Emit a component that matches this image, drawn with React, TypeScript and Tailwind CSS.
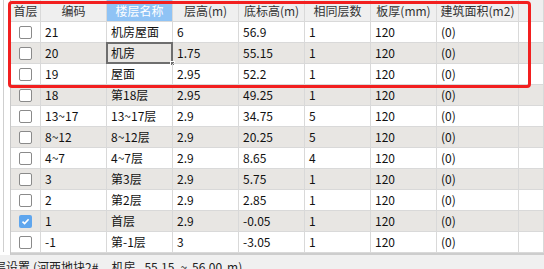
import React from "react";

type Row = { first: boolean; code: string; name: string; h: string; base: string; same: string; thick: string; area: string };

const rows: Row[] = [
  { first: false, code: "21", name: "机房屋面", h: "6", base: "56.9", same: "1", thick: "120", area: "(0)" },
  { first: false, code: "20", name: "机房", h: "1.75", base: "55.15", same: "1", thick: "120", area: "(0)" },
  { first: false, code: "19", name: "屋面", h: "2.95", base: "52.2", same: "1", thick: "120", area: "(0)" },
  { first: false, code: "18", name: "第18层", h: "2.95", base: "49.25", same: "1", thick: "120", area: "(0)" },
  { first: false, code: "13~17", name: "13~17层", h: "2.9", base: "34.75", same: "5", thick: "120", area: "(0)" },
  { first: false, code: "8~12", name: "8~12层", h: "2.9", base: "20.25", same: "5", thick: "120", area: "(0)" },
  { first: false, code: "4~7", name: "4~7层", h: "2.9", base: "8.65", same: "4", thick: "120", area: "(0)" },
  { first: false, code: "3", name: "第3层", h: "2.9", base: "5.75", same: "1", thick: "120", area: "(0)" },
  { first: false, code: "2", name: "第2层", h: "2.9", base: "2.85", same: "1", thick: "120", area: "(0)" },
  { first: true, code: "1", name: "首层", h: "2.9", base: "-0.05", same: "1", thick: "120", area: "(0)" },
  { first: false, code: "-1", name: "第-1层", h: "3", base: "-3.05", same: "1", thick: "120", area: "(0)" },
];

const headers = ["首层", "编码", "楼层名称", "层高(m)", "底标高(m)", "相同层数", "板厚(mm)", "建筑面积(m2)", ""];

function Check({ on }: { on: boolean }) {
  if (on) {
    return (
      <div className="w-[13px] h-[13px] rounded-[2px] bg-[#5fa6ee] flex items-center justify-center">
        <svg width="9" height="9" viewBox="0 0 9 9">
          <path d="M1.5 4.6 L3.6 6.6 L7.6 2.2" stroke="white" strokeWidth="1.6" fill="none" />
        </svg>
      </div>
    );
  }
  return <div className="w-[13px] h-[13px] rounded-[2px] border border-[#8a8a8a] bg-white" />;
}

export default function App() {
  return (
    <div
      className="relative w-[544px] h-[269px] overflow-hidden bg-[#f0f0f0] text-[12px]"
      style={{ fontFamily: '"Noto Sans CJK SC", "Noto Sans", sans-serif' }}
    >
      <div className="flex h-[255px]">
        <div className="w-[10px] bg-white flex">
          <div className="ml-[3px] w-px h-[252px] bg-[#cfcfcf]" />
        </div>
        <div className="flex-1 flex flex-col border-l border-[#c8c8c8] border-b-2 border-b-[#cdcdcd]">
          <div className="grid grid-cols-[30px_66px_66px_66px_66px_66px_66px_82px_1fr] h-[22px] bg-[#efefef]">
            {headers.map((h, i) => (
              <div
                key={i}
                className={`flex items-center justify-center border-r border-b border-[#d9d9d9] leading-none ${
                  i === 2 ? "bg-[#8fc3f5] text-white" : "text-[#333333]"
                }`}
              >
                {h}
              </div>
            ))}
          </div>
          {rows.map((r, ri) => {
            const bg = ri % 2 === 1 ? "bg-[#e8e6e3]" : "bg-white";
            const cells = [r.code, r.name, r.h, r.base, r.same, r.thick, r.area, ""];
            return (
              <div key={ri} className={`grid grid-cols-[30px_66px_66px_66px_66px_66px_66px_82px_1fr] h-[21px] ${bg}`}>
                <div className="flex items-center justify-center border-r border-b border-[#d9d9d9]">
                  <Check on={r.first} />
                </div>
                {cells.map((c, ci) => (
                  <div
                    key={ci}
                    className="relative flex items-center pl-[4px] border-r border-b border-[#d9d9d9] text-[#111111] leading-none whitespace-nowrap"
                  >
                    {c}
                    {ri === 1 && ci === 1 && (
                      <>
                        <div className="absolute left-[-1px] top-[-1px] right-[-1px] bottom-[-1px] border-2 border-[#6e6e6e]" />
                        <div className="absolute right-[-3px] bottom-[-3px] w-[5px] h-[5px] bg-[#6e6e6e] border border-white" />
                      </>
                    )}
                  </div>
                ))}
              </div>
            );
          })}
        </div>
      </div>
      <div className="mt-[6px] -ml-[6px] flex items-start whitespace-nowrap text-[#222222] leading-none">
        <span>层设置</span>
        <span className="ml-[3px]">(河西地块2#</span>
        <span className="ml-[13px]">机房</span>
        <span className="ml-[9px]">55.15</span>
        <span className="ml-[6px]">~</span>
        <span className="ml-[5px]">56.00</span>
        <span className="ml-[5px]">m)</span>
      </div>
      <div className="absolute left-[8px] top-[1px] w-[523px] h-[87px] border-[3px] border-[#f21f1f] rounded-[4px] pointer-events-none" />
    </div>
  );
}
